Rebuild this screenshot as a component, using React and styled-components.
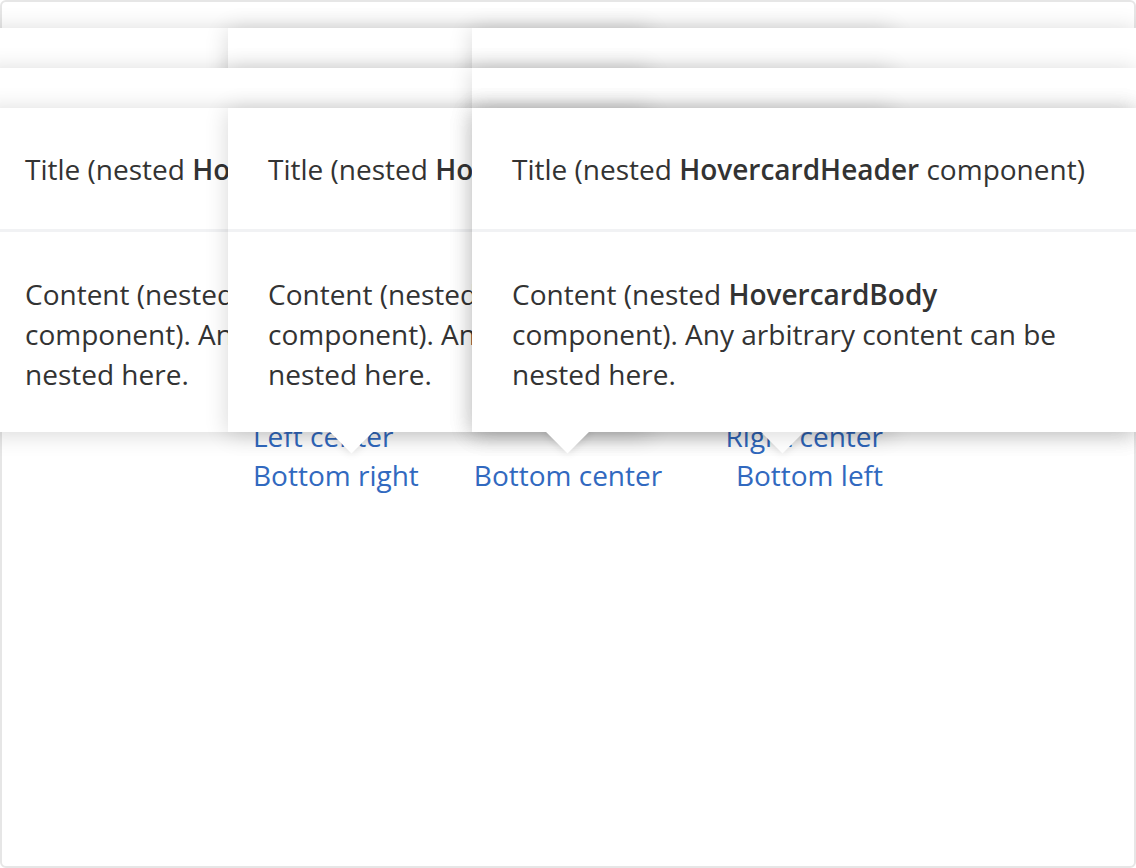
import styled, { createGlobalStyle } from "styled-components";

const GlobalStyle = createGlobalStyle`
  html, body {
    margin: 0;
    padding: 0;
    overflow: hidden;
    background: #fff;
  }
  body {
    font-family: "Open Sans", "Noto Sans", sans-serif;
  }
`;

// cards are drawn in this order, later ones on top
const cards = [
  { top: 28, left: -15 },
  { top: 28, left: 228 },
  { top: 28, left: 472 },
  { top: 68, left: 228 },
  { top: 68, left: -15 },
  { top: 68, left: 472 },
  { top: 108, left: -15 },
  { top: 108, left: 228, arrow: 124 },
  { top: 108, left: 472, arrow: 311 },
  { top: 108, left: 472, arrow: 96 },
];

const rows = [
  ["Left center", null, "Right center"],
  ["Bottom right", "Bottom center", "Bottom left"],
];

const aligns = ["start", "center", "end"];

export default function App() {
  return (
    <>
      <GlobalStyle />
      <Frame>
        <TriggerGrid>
          {rows.map((row, r) =>
            row.map((label, c) =>
              label ? (
                <Trigger key={`${r}-${c}`} href="#" $align={aligns[c]}>
                  {label}
                </Trigger>
              ) : (
                <span key={`${r}-${c}`} />
              )
            )
          )}
        </TriggerGrid>

        {cards.map((card, i) => (
          <Hovercard key={i} $top={card.top} $left={card.left}>
            <Panel>
              <HovercardHeader>
                Title (nested <b>HovercardHeader</b> component)
              </HovercardHeader>
              <HovercardBody>
                Content (nested <b>HovercardBody</b> component). Any arbitrary
                content can be nested here.
              </HovercardBody>
            </Panel>
            {card.arrow != null && (
              <ArrowClip $at={card.arrow}>
                <ArrowTip />
              </ArrowClip>
            )}
          </Hovercard>
        ))}
      </Frame>
    </>
  );
}

// Styled components

const Frame = styled.div`
  position: relative;
  box-sizing: border-box;
  width: 1136px;
  height: 868px;
  border: 2px solid #e6e6e6;
  border-radius: 6px;
  padding-top: 415px;
`;

const TriggerGrid = styled.div`
  display: grid;
  grid-template-columns: repeat(3, 210px);
  width: 630px;
  margin: 0 auto;
  font-size: 28px;
  line-height: 39px;
`;

const Trigger = styled.a`
  justify-self: ${(p) => p.$align};
  color: #3169bf;
  text-decoration: none;
`;

const Hovercard = styled.div`
  position: absolute;
  top: ${(p) => p.$top - 2}px;
  left: ${(p) => p.$left - 2}px;
  width: 664px;
`;

const Panel = styled.div`
  background: #fff;
  box-shadow: 0 2px 22px rgba(0, 0, 0, 0.16);
  color: #333;
  font-size: 28px;
  line-height: 40px;

  b {
    font-weight: 600;
  }
`;

const HovercardHeader = styled.div`
  padding: 41px 40px 40px;
  white-space: nowrap;
  border-bottom: 3px solid #f1f2f4;
`;

const HovercardBody = styled.div`
  padding: 42px 54px 38px 40px;
`;

const ArrowClip = styled.div`
  position: absolute;
  top: 100%;
  left: ${(p) => p.$at - 30}px;
  width: 60px;
  height: 30px;
  overflow: hidden;
`;

const ArrowTip = styled.div`
  position: absolute;
  top: -16px;
  left: 14px;
  width: 31px;
  height: 31px;
  background: #fff;
  transform: rotate(45deg);
  box-shadow: 0 0 10px rgba(0, 0, 0, 0.14);
`;
